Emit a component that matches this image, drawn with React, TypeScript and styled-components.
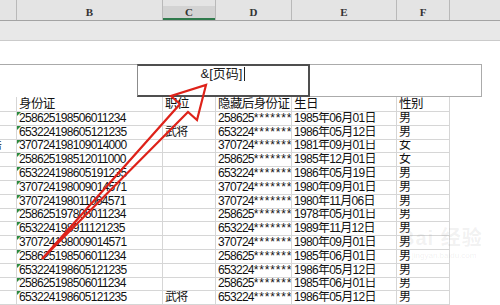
import { createGlobalStyle, styled } from 'styled-components';

const GlobalStyle = createGlobalStyle`
    html, body {
        margin: 0;
        padding: 0;
        background: #fff;
    }
    body {
        font-family: "Liberation Sans", "Noto Sans CJK SC", sans-serif;
    }
`;

const COLUMNS = [
    { key: 'A', width: 17 },
    { key: 'B', width: 146 },
    { key: 'C', width: 53 },
    { key: 'D', width: 76 },
    { key: 'E', width: 105 },
    { key: 'F', width: 53 }
];

const GRID = COLUMNS.map(c => `${c.width}px`).join(' ');

const ROWS: { id: string; job?: string; birth: string; sex: string; side?: string }[] = [
    { id: '258625198506011234', birth: '1985年06月01日', sex: '男' },
    { id: '653224198605121235', job: '武将', birth: '1986年05月12日', sex: '男' },
    { id: '370724198109014000', birth: '1981年09月01日', sex: '女', side: '岳' },
    { id: '258625198512011000', birth: '1985年12月01日', sex: '女' },
    { id: '653224198605191235', birth: '1986年05月19日', sex: '男' },
    { id: '370724198009014571', birth: '1980年09月01日', sex: '男' },
    { id: '370724198011064571', birth: '1980年11月06日', sex: '男' },
    { id: '258625197805011234', birth: '1978年05月01日', sex: '男' },
    { id: '653224198911121235', birth: '1989年11月12日', sex: '男' },
    { id: '370724198009014571', birth: '1980年09月01日', sex: '男' },
    { id: '258625198506011234', birth: '1985年06月01日', sex: '男' },
    { id: '653224198605121235', birth: '1986年05月12日', sex: '男' },
    { id: '258625198506011234', birth: '1985年06月01日', sex: '男' },
    { id: '653224198605121235', job: '武将', birth: '1986年05月12日', sex: '男' }
];

const Page = styled.div`
    position: relative;
    width: 500px;
    height: 305px;
    overflow: hidden;
    background: #fff;
`;

const ColumnBar = styled.div`
    display: flex;
    height: 21px;
    box-sizing: border-box;
    background: #e4e4e4;
    border-bottom: 1px solid #a3a3a3;
`;

const ColumnCell = styled.div<{ $width: number; $selected?: boolean }>`
    width: ${p => p.$width}px;
    flex-shrink: 0;
    box-sizing: border-box;
    border-right: 1px solid #b9b9b9;
    display: flex;
    align-items: flex-end;
    justify-content: center;
    padding-bottom: 2px;
    font-family: "Liberation Serif", serif;
    font-weight: bold;
    font-size: 11px;
    color: #333;
    background: ${p =>
        p.$selected ? 'linear-gradient(#e4e4e4 0 6px, #d3d3d3 6px)' : 'transparent'};
    box-shadow: ${p => (p.$selected ? 'inset 0 -2px 0 #2f7a4c' : 'none')};
`;

const RulerBand = styled.div`
    height: 20px;
    box-sizing: border-box;
    background: #e8e8e8;
    border-bottom: 1px solid #cbcbcb;
`;

const HeaderArea = styled.div`
    display: flex;
    align-items: flex-end;
    height: 56px;
`;

const HeaderBox = styled.div<{ $width: number }>`
    width: ${p => p.$width}px;
    height: 33px;
    box-sizing: border-box;
    flex-shrink: 0;
`;

const LeftBox = styled(HeaderBox)`
    border-top: 1px solid #aaa;
`;

const ActiveBox = styled(HeaderBox)`
    border: 2px solid #4f4f4f;
    border-left: 1px solid #8c8c8c;
    display: flex;
    justify-content: center;
    align-items: flex-start;
    padding-top: 1px;
    font-size: 13px;
    line-height: 14px;
    color: #222;
`;

const RightBox = styled(HeaderBox)`
    border: 1px solid #ababab;
    border-left: none;
`;

const Caret = styled.span`
    display: inline-block;
    width: 1px;
    height: 14px;
    margin-left: 2px;
    background: #222;
`;

const Sheet = styled.div`
    display: flex;
    flex-direction: column;
`;

const Row = styled.div<{ $height: number }>`
    display: grid;
    grid-template-columns: ${GRID};
    height: ${p => p.$height}px;
`;

const Cell = styled.div`
    position: relative;
    box-sizing: border-box;
    border-right: 1px solid #d6d6d6;
    border-bottom: 1px solid #d6d6d6;
    padding: 0 0 0 2px;
    font-size: 12px;
    letter-spacing: -0.7px;
    line-height: 13px;
    color: #111;
    white-space: nowrap;
    overflow: hidden;
    display: flex;
    align-items: flex-end;
`;

const SideCell = styled(Cell)`
    padding: 0;
`;

const SideText = styled.span`
    margin-left: -10px;
`;

const IdCell = styled(Cell)`
    &::before {
        content: '';
        position: absolute;
        left: 0;
        top: 0;
        border-top: 4px solid #2c8a3f;
        border-right: 4px solid transparent;
    }
`;

const Mask = styled.span`
    letter-spacing: 0.8px;
`;

const HeadCell = styled(Cell)`
    font-size: 12.5px;
    letter-spacing: -0.6px;
`;

const Arrow = styled.svg`
    position: absolute;
    inset: 0;
    pointer-events: none;
`;

const Watermark = styled.div`
    position: absolute;
    left: 400px;
    top: 222px;
    display: flex;
    flex-direction: column;
    align-items: flex-start;
    color: rgba(120, 120, 120, 0.1);
    pointer-events: none;
`;

const MarkTitle = styled.span`
    font-weight: bold;
    font-size: 20px;
    letter-spacing: 1px;
`;

const MarkSub = styled.span`
    font-size: 8px;
    margin-left: 12px;
`;

export default function App() {
    return (
        <>
            <GlobalStyle />
            <Page>
                <ColumnBar>
                    {COLUMNS.map(c => (
                        <ColumnCell key={c.key} $width={c.width} $selected={c.key === 'C'}>
                            {c.key === 'A' ? '' : c.key}
                        </ColumnCell>
                    ))}
                </ColumnBar>
                <RulerBand />
                <HeaderArea>
                    <LeftBox $width={137} />
                    <ActiveBox $width={173}>
                        &amp;[页码]
                        <Caret />
                    </ActiveBox>
                    <RightBox $width={172} />
                </HeaderArea>
                <Sheet>
                    <Row $height={15}>
                        <SideCell />
                        <HeadCell>身份证</HeadCell>
                        <HeadCell>职位</HeadCell>
                        <HeadCell>隐藏后身份证</HeadCell>
                        <HeadCell>生日</HeadCell>
                        <HeadCell>性别</HeadCell>
                    </Row>
                    {ROWS.map((r, i) => (
                        <Row key={i} $height={13.8}>
                            <SideCell>{r.side && <SideText>{r.side}</SideText>}</SideCell>
                            <IdCell>{r.id}</IdCell>
                            <Cell>{r.job}</Cell>
                            <Cell>
                                {r.id.slice(0, 6)}
                                <Mask>*******</Mask>
                            </Cell>
                            <Cell>{r.birth}</Cell>
                            <Cell>{r.sex}</Cell>
                        </Row>
                    ))}
                </Sheet>
                <Watermark>
                    <MarkTitle>Bai 经验</MarkTitle>
                    <MarkSub>jingyan.baidu.com</MarkSub>
                </Watermark>
                <Arrow width="500" height="305" viewBox="0 0 500 305">
                    <polygon
                        points="42,259 180,104 171,96 206,85 197,120 188,112"
                        fill="none"
                        stroke="#de2219"
                        strokeWidth="2.2"
                        strokeLinejoin="miter"
                    />
                </Arrow>
            </Page>
        </>
    );
}
